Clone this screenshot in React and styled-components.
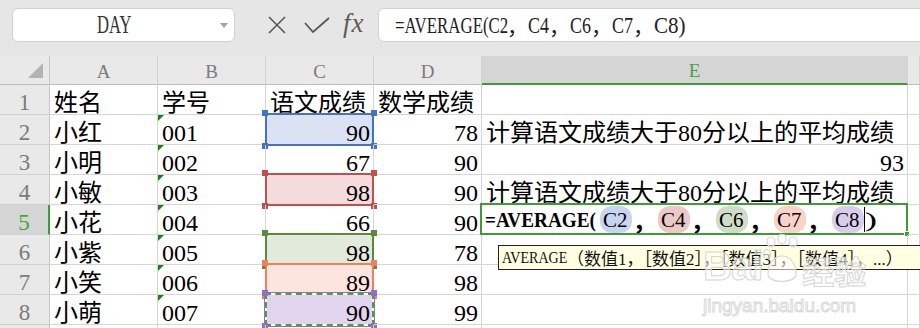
import React from "react";
import styled, { createGlobalStyle } from "styled-components";

const GREEN = "#3f9c35";

const GlobalStyle = createGlobalStyle`
  *, *::before, *::after { box-sizing: border-box; }
  html, body { margin: 0; padding: 0; }
  body {
    width: 920px;
    height: 328px;
    overflow: hidden;
    background: #fff;
    font-family: "Liberation Serif", "Noto Sans CJK SC", serif;
  }
`;

// Times advance widths (per 1000 em) for the glyphs used in squeezed runs
const REGULAR = { "=": 564, A: 722, V: 722, E: 611, R: 667, G: 722, "(": 333, ")": 333, C: 667, D: 722, Y: 722 };
const BOLD = { "=": 570, A: 722, V: 722, E: 667, R: 722, G: 778, "(": 333, ")": 333, C: 722, D: 722, Y: 722 };

// SimSun-like latin: every glyph squeezed into half an em
const Latin = styled.span`
  display: inline-block;
  font-family: "Liberation Serif", serif;
  font-size: ${(p) => p.$f}px;
  font-weight: ${(p) => (p.$bold ? 700 : 400)};
  white-space: pre;
  transform: scaleX(${(p) => p.$k});
  transform-origin: 0 50%;
  margin-right: ${(p) => p.$mr}px;
`;

function Sim({ f, h, bold, children }) {
  const table = bold ? BOLD : REGULAR;
  const natural = ([...children].reduce((s, c) => s + (table[c] || 500), 0) * f) / 1000;
  const target = children.length * h;
  return (
    <Latin $f={f} $bold={bold} $k={(target / natural).toFixed(3)} $mr={(target - natural).toFixed(2)}>
      {children}
    </Latin>
  );
}

const Comma = styled.span`
  font-family: "Noto Sans CJK SC", sans-serif;
  font-size: ${(p) => p.$size}px;
  font-weight: ${(p) => (p.$bold ? 700 : 400)};
  margin: 0 ${(p) => p.$gap || 0}px;
  line-height: 18px;
`;

/* ---------- formula toolbar ---------- */

const Toolbar = styled.div`
  display: flex;
  align-items: stretch;
  height: 56px;
  padding: 8px 0 14px 12px;
  background: #e6e6e6;
`;

const NameBox = styled.div`
  position: relative;
  width: 223px;
  padding-right: 20px;
  display: flex;
  align-items: center;
  justify-content: center;
  background: #fff;
  border: 1px solid #d2d2d2;
  border-radius: 6px;
  color: #333;

  &::after {
    content: "";
    position: absolute;
    right: 6px;
    top: 14px;
    border-left: 4px solid transparent;
    border-right: 4px solid transparent;
    border-top: 5px solid #a3a3a3;
  }
`;

const Icons = styled.div`
  display: flex;
  align-items: center;
  margin-left: 33px;
  color: #585858;
`;

const IconSvg = styled.svg`
  display: block;
  margin-right: ${(p) => p.$gap}px;
`;

const Fx = styled.span`
  font-family: "Liberation Serif", serif;
  font-style: italic;
  font-size: 27px;
  letter-spacing: 1px;
  color: #5c5c5c;
  line-height: 1;
  margin-top: -4px;
`;

const FormulaBox = styled.div`
  flex: 1;
  margin-left: 13px;
  margin-right: -10px;
  display: flex;
  align-items: center;
  padding-left: 16px;
  background: #fff;
  border: 1px solid #d2d2d2;
  border-radius: 6px;
  color: #222;
`;

/* ---------- sheet ---------- */

const Sheet = styled.div`
  position: relative;
  display: grid;
  grid-template-columns: 50px repeat(4, 108px) 426px 1fr;
  grid-template-rows: 29px;
  grid-auto-rows: 30px;
`;

const Corner = styled.div`
  position: relative;
  background: #e9e9e9;
  border-right: 1px solid #c8c8c8;
  border-bottom: 1px solid #bdbdbd;

  &::after {
    content: "";
    position: absolute;
    left: 28px;
    top: 7px;
    width: 15px;
    height: 15px;
    background: #b3b3b3;
    clip-path: polygon(100% 0, 100% 100%, 0 100%);
  }
`;

const ColHead = styled.div`
  display: flex;
  align-items: center;
  justify-content: center;
  padding-top: 3px;
  font-size: 19px;
  background: ${(p) => (p.$active ? "#d5d5d5" : "#e9e9e9")};
  color: ${(p) => (p.$active ? "#45a53c" : "#7b7b7b")};
  border-right: 1px solid #d2d2d2;
  border-bottom: ${(p) => (p.$active ? `2px solid ${GREEN}` : "1px solid #bdbdbd")};
`;

const RowHead = styled.div`
  display: flex;
  align-items: flex-end;
  justify-content: center;
  padding-bottom: 1px;
  line-height: 20px;
  font-size: 23px;
  background: ${(p) => (p.$active ? "#d5d5d5" : "#e9e9e9")};
  color: ${(p) => (p.$active ? "#45a53c" : "#7b7b7b")};
  border-right: ${(p) => (p.$active ? `2px solid ${GREEN}` : "1px solid #c8c8c8")};
  border-bottom: 1px solid #d0d0d0;
`;

const Cell = styled.div`
  position: relative;
  display: flex;
  align-items: flex-end;
  justify-content: ${(p) => (p.$right ? "flex-end" : "flex-start")};
  padding: 0 ${(p) => (p.$right ? 3 : 4)}px 1px;
  font-size: 24px;
  line-height: 20px;
  white-space: nowrap;
  color: #000;
  border-right: 1px solid #d6d6d6;
  border-bottom: 1px solid #d6d6d6;

  &::before {
    content: "";
    display: ${(p) => (p.$flag ? "block" : "none")};
    position: absolute;
    left: 0;
    top: 0;
    border-style: solid;
    border-width: 6px 6px 0 0;
    border-color: #1d7d1d transparent transparent transparent;
  }
`;

const Value = styled.span`
  position: relative;
  z-index: 1;
`;

const Range = styled.div`
  position: absolute;
  top: -2px;
  left: -1px;
  right: -1px;
  bottom: -2px;
  border: 2px ${(p) => (p.$dashed ? "dashed" : "solid")} ${(p) => p.$line};
  background: linear-gradient(${(p) => p.$fill}, ${(p) => p.$fill}) padding-box,
    #fff border-box;
  box-shadow: ${(p) => (p.$frame ? `0 0 0 1px ${p.$frame}` : "none")};
`;

const Handle = styled.span`
  position: absolute;
  width: 6px;
  height: 6px;
  background: ${(p) => p.$color};
  ${(p) => (p.$top ? "top: -5px;" : "bottom: -5px;")}
  ${(p) => (p.$left ? "left: -5px;" : "right: -5px;")}
`;

const FormulaCell = styled.div`
  position: relative;
  display: flex;
  align-items: center;
  padding-left: 3px;
  border-right: 1px solid #d6d6d6;
  border-bottom: 1px solid #d6d6d6;
  color: #000;
`;

const ActiveFrame = styled.div`
  position: absolute;
  top: -2px;
  left: -2px;
  right: -1px;
  bottom: -1px;
  border: 2px solid ${GREEN};

  &::after {
    content: "";
    position: absolute;
    right: -4px;
    bottom: -4px;
    width: 6px;
    height: 6px;
    background: ${GREEN};
    border: 1px solid #fff;
  }
`;

const Chip = styled.span`
  display: inline-flex;
  align-items: center;
  justify-content: center;
  width: 32px;
  height: 27px;
  margin-left: ${(p) => p.$ml || 0}px;
  border-radius: 12px;
  background: ${(p) => p.$bg};
`;

const Caret = styled.span`
  width: 1px;
  height: 25px;
  background: #000;
`;

const Tooltip = styled.div`
  position: absolute;
  left: 498px;
  top: 189px;
  width: 440px;
  height: 25px;
  display: flex;
  align-items: center;
  padding-left: 3px;
  background: #ffffe1;
  border: 1px solid #222;
  font-family: "Liberation Serif", "Noto Sans CJK SC", serif;
  font-size: 17px;
  color: #111;
  white-space: nowrap;
  overflow: hidden;
`;

const Watermark = styled.div`
  position: absolute;
  left: 703px;
  top: 172px;
  display: flex;
  flex-direction: column;
  pointer-events: none;
`;

const MarkLogo = styled.div`
  display: flex;
  align-items: flex-end;
  height: 58px;
`;

const MarkText = styled.span`
  font-family: ${(p) => (p.$cjk ? '"Noto Sans CJK SC", sans-serif' : '"Liberation Sans", sans-serif')};
  font-weight: 700;
  font-size: ${(p) => p.$size}px;
  line-height: 1;
  color: rgba(255, 255, 255, 0.55);
  -webkit-text-stroke: 1px #d6d6d6;
  letter-spacing: ${(p) => p.$ls || 0}px;
`;

const MarkUrl = styled.span`
  margin-top: 9px;
  font-family: "Liberation Sans", sans-serif;
  font-size: 19px;
  color: rgba(255, 255, 255, 0.6);
  -webkit-text-stroke: 1px #d9d9d9;
`;

const COLORS = {
  blue: { line: "#4472c4", fill: "#dbe2f4", chip: "#c8d4f0" },
  red: { line: "#c0504d", fill: "#f3dcdb", chip: "#ecc8c6" },
  green: { line: "#5b8a3c", fill: "#e2eadc", chip: "#cfdcc8" },
  orange: { line: "#ee7f60", fill: "#fce5dd", chip: "#fad3c8" },
  purple: { line: "#4da130", fill: "#e0d4ee", chip: "#dacdec", frame: "#9070c2", handle: "#9070c2", dashed: true },
};

const rows = [
  { name: "姓名", id: "学号", cn: "语文成绩", math: "数学成绩" },
  { name: "小红", id: "001", cn: "90", math: "78", hl: "blue", e: "note" },
  { name: "小明", id: "002", cn: "67", math: "90", e: "result" },
  { name: "小敏", id: "003", cn: "98", math: "90", hl: "red", e: "note" },
  { name: "小花", id: "004", cn: "66", math: "90", e: "formula" },
  { name: "小紫", id: "005", cn: "98", math: "78", hl: "green" },
  { name: "小笑", id: "006", cn: "89", math: "98", hl: "orange" },
  { name: "小萌", id: "007", cn: "90", math: "99", hl: "purple" },
];

const refs = [
  ["C2", "blue"],
  ["C4", "red"],
  ["C6", "green"],
  ["C7", "orange"],
  ["C8", "purple"],
];

function RangeCell({ hl, children }) {
  const c = COLORS[hl];
  const handle = c.handle || c.line;
  return (
    <Cell $right>
      <Range $line={c.line} $fill={c.fill} $dashed={c.dashed} $frame={c.frame}>
        <Handle $top $left $color={handle} />
        <Handle $top $color={handle} />
        <Handle $left $color={handle} />
        <Handle $color={handle} />
      </Range>
      <Value>{children}</Value>
    </Cell>
  );
}

function FormulaEditor() {
  return (
    <FormulaCell>
      <Sim f={22} h={12.6} bold>
        =AVERAGE(
      </Sim>
      {refs.map(([ref, color], i) => (
        <React.Fragment key={ref}>
          <Chip $bg={COLORS[color].chip} $ml={i === 0 ? 4 : 0}>
            <Sim f={22} h={12.2}>
              {ref}
            </Sim>
          </Chip>
          {i < refs.length - 1 && (
            <Comma $size={24} $gap={1} $bold>
              ，
            </Comma>
          )}
        </React.Fragment>
      ))}
      <Caret />
      <Sim f={22} h={12}>
        )
      </Sim>
      <ActiveFrame />
    </FormulaCell>
  );
}

function ECell({ kind }) {
  if (kind === "note") return <Cell>计算语文成绩大于80分以上的平均成绩</Cell>;
  if (kind === "result") return <Cell $right>93</Cell>;
  if (kind === "formula") return <FormulaEditor />;
  return <Cell />;
}

function Paw() {
  return (
    <svg width="40" height="52" viewBox="0 0 40 52">
      <g fill="rgba(255,255,255,0.55)" stroke="#d6d6d6" strokeWidth="1.2">
        <ellipse cx="9" cy="8" rx="4" ry="5" />
        <ellipse cx="20" cy="5" rx="4" ry="5" />
        <ellipse cx="31" cy="8" rx="4" ry="5" />
        <ellipse cx="5" cy="20" rx="3.5" ry="4.5" />
        <path d="M6 40 C6 30 12 22 20 22 C28 22 34 30 34 40 C34 50 6 50 6 40 Z" />
      </g>
    </svg>
  );
}

export default function App() {
  return (
    <>
      <GlobalStyle />
      <Toolbar>
        <NameBox>
          <Sim f={26} h={12}>
            DAY
          </Sim>
        </NameBox>
        <Icons>
          <IconSvg width="18" height="18" viewBox="0 0 18 18" $gap={18}>
            <path d="M1 1 L17 17 M17 1 L1 17" stroke="currentColor" strokeWidth="1.6" fill="none" />
          </IconSvg>
          <IconSvg width="26" height="16" viewBox="0 0 26 16" $gap={13}>
            <path d="M1 6 L9 15 L25 1" stroke="currentColor" strokeWidth="1.8" fill="none" />
          </IconSvg>
          <Fx>fx</Fx>
        </Icons>
        <FormulaBox>
          <Sim f={24} h={10.5}>
            =AVERAGE(C2
          </Sim>
          <Comma $size={21}>，</Comma>
          <Sim f={24} h={10.5}>
            C4
          </Sim>
          <Comma $size={21}>，</Comma>
          <Sim f={24} h={10.5}>
            C6
          </Sim>
          <Comma $size={21}>，</Comma>
          <Sim f={24} h={10.5}>
            C7
          </Sim>
          <Comma $size={21}>，</Comma>
          <Sim f={24} h={10.5}>
            C8)
          </Sim>
        </FormulaBox>
      </Toolbar>

      <Sheet>
        <Corner />
        <ColHead>A</ColHead>
        <ColHead>B</ColHead>
        <ColHead>C</ColHead>
        <ColHead>D</ColHead>
        <ColHead $active>E</ColHead>
        <ColHead />

        {rows.map((r, i) => (
          <React.Fragment key={i}>
            <RowHead $active={i === 4}>{i + 1}</RowHead>
            <Cell>{r.name}</Cell>
            <Cell $flag={i > 0}>{r.id}</Cell>
            {r.hl ? (
              <RangeCell hl={r.hl}>{r.cn}</RangeCell>
            ) : (
              <Cell $right={i > 0}>{r.cn}</Cell>
            )}
            <Cell $right={i > 0}>{r.math}</Cell>
            <ECell kind={r.e} />
            <Cell />
          </React.Fragment>
        ))}

        {/* row 9 only peeks in under the frame edge */}
        <RowHead />
        <Cell />
        <Cell />
        <Cell />
        <Cell />
        <Cell />
        <Cell />

        <Tooltip>
          <Sim f={17} h={9.6}>
            AVERAGE
          </Sim>
          （数值1，［数值2］，［数值3］，［数值4］，...）
        </Tooltip>

        <Watermark>
          <MarkLogo>
            <MarkText $size={40} $ls={-1}>
              Bai
            </MarkText>
            <Paw />
            <MarkText $cjk $size={32}>
              经验
            </MarkText>
          </MarkLogo>
          <MarkUrl>jingyan.baidu.com</MarkUrl>
        </Watermark>
      </Sheet>
    </>
  );
}
